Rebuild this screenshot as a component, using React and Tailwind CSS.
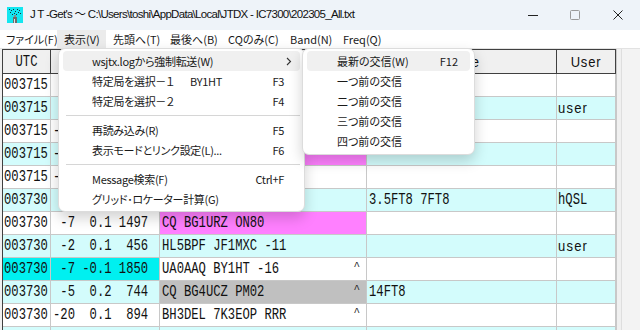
import React from "react";

const WHITE = "bg-white";
const CYAN = "bg-[#d3fcfc]";

const rows = [
  { utc: "003715", db: "", msg: "", note: "", user: "", bg: WHITE },
  { utc: "003715", db: "", msg: "", note: "", user: "user", bg: CYAN },
  { utc: "003715", db: "-", msg: "", note: "", user: "", bg: WHITE },
  { utc: "003715", db: "-", msg: "", note: "", user: "", bg: CYAN, msgBg: "bg-[#ff80ff]", mark: "*" },
  { utc: "003715", db: "-", msg: "", note: "", user: "", bg: WHITE },
  { utc: "003730", db: "", msg: "", note: "3.5FT8 7FT8", user: "hQSL", bg: CYAN },
  { utc: "003730", db: " -7  0.1 1497", msg: "CQ BG1URZ ON80", note: "", user: "", bg: WHITE, msgBg: "bg-[#ff80ff]" },
  { utc: "003730", db: " -2  0.1  456", msg: "HL5BPF JF1MXC -11", note: "", user: "user", bg: CYAN },
  { utc: "003730", db: " -7 -0.1 1850", msg: "UA0AAQ BY1HT -16", note: "", user: "", bg: WHITE, utcBg: "bg-[#00f0f0]", dbBg: "bg-[#00f0f0]", mark: "^" },
  { utc: "003730", db: " -5  0.2  744", msg: "CQ BG4UCZ PM02", note: "14FT8", user: "", bg: CYAN, msgBg: "bg-[#c0c0c0]", mark: "^" },
  { utc: "003730", db: "-20  0.1  894", msg: "BH3DEL 7K3EOP RRR", note: "", user: "", bg: WHITE, mark: "^" },
  { utc: "", db: "", msg: "", note: "", user: "", bg: CYAN },
];

const mainItems = [
  { label: "wsjtx.logから強制転送(W)", arrow: true, hl: true },
  { label: "特定局を選択－１", extra: "BY1HT", key: "F3" },
  { label: "特定局を選択－２", key: "F4" },
  "sep",
  { label: "再読み込み(R)", key: "F5" },
  { label: "表示モードとリンク設定(L)...", key: "F6" },
  "sep",
  { label: "Message検索(F)", key: "Ctrl+F" },
  { label: "グリッド･ロケーター計算(G)" },
];

const subItems = [
  { label: "最新の交信(W)", key: "F12", hl: true },
  { label: "一つ前の交信" },
  { label: "二つ前の交信" },
  { label: "三つ前の交信" },
  { label: "四つ前の交信" },
];

const menuBar = [
  { label: "ファイル(F)", w: "w-[57px] pl-[6px]" },
  { label: "表示(V)", w: "w-[49px] pl-[7px]", hl: true },
  { label: "先頭へ(T)", w: "w-[57px] pl-[7px]" },
  { label: "最後へ(B)", w: "w-[58px] pl-[7px]" },
  { label: "CQのみ(C)", w: "w-[62px] pl-[7px]" },
  { label: "Band(N)", w: "w-[53px] pl-[7px]" },
  { label: "Freq(Q)", w: "w-[50px] pl-[7px]" },
];

function Mono({ children, className = "" }) {
  return (
    <span className={`inline-block whitespace-pre font-['Liberation_Mono',monospace] text-[12.2px] leading-[12px] scale-y-[1.3] text-[#111] ${className}`}>
      {children}
    </span>
  );
}

function AppIcon() {
  return (
    <svg width="16" height="16" viewBox="0 0 16 16">
      <rect width="16" height="16" fill="#12e6f0" />
      <g fill="#1a2a3a">
        <rect x="2" y="2" width="1" height="1" />
        <rect x="4" y="3" width="1" height="1" />
        <rect x="6" y="2" width="1" height="1" />
        <rect x="8" y="4" width="1" height="1" />
        <rect x="10" y="2" width="1" height="1" />
        <rect x="12" y="3" width="1" height="1" />
        <rect x="3" y="5" width="1" height="1" />
        <rect x="7" y="6" width="1" height="1" />
        <rect x="11" y="5" width="1" height="1" />
        <rect x="13" y="6" width="1" height="1" />
        <rect x="5" y="7" width="1" height="1" />
        <rect x="9" y="7" width="1" height="1" />
      </g>
      <rect x="6" y="10" width="4" height="6" fill="#6b6b6b" />
      <rect x="7" y="8" width="2" height="2" fill="#8a8a8a" />
      <rect x="7" y="12" width="1" height="4" fill="#e0e0e0" />
    </svg>
  );
}

function TitleBar() {
  return (
    <div className="flex h-[30px] items-center bg-[#eef3f9]">
      <div className="ml-[7px] flex h-[16px] w-[16px]">
        <AppIcon />
      </div>
      <div className="ml-[7px] text-[11.5px] tracking-[-0.7px] text-[#111] font-['Liberation_Sans','Noto_Sans_CJK_JP',sans-serif] whitespace-pre">
        J T -Get's 〜 C:\Users\toshi\AppData\Local\JTDX - IC7300\202305_All.txt
      </div>
      <div className="flex-1" />
      <div className="flex h-full w-[42px] items-center justify-center">
        <svg width="10" height="10" viewBox="0 0 10 10">
          <path d="M0 5.5h10" stroke="#222" strokeWidth="1" />
        </svg>
      </div>
      <div className="flex h-full w-[42px] items-center justify-center">
        <svg width="10" height="10" viewBox="0 0 10 10">
          <rect x="0.5" y="0.5" width="9" height="9" rx="1" fill="none" stroke="#9a9a9a" strokeWidth="1" />
        </svg>
      </div>
      <div className="flex h-full w-[44px] items-center justify-center">
        <svg width="10" height="10" viewBox="0 0 10 10">
          <path d="M0.5 0.5l9 9M9.5 0.5l-9 9" stroke="#222" strokeWidth="1" />
        </svg>
      </div>
    </div>
  );
}

function MenuBar() {
  return (
    <div className="flex h-[18px] items-center bg-white text-[11px] text-[#1a1a1a] font-['Noto_Sans_CJK_JP',sans-serif] [font-feature-settings:'palt']">
      {menuBar.map((m) => (
        <div
          key={m.label}
          className={`flex h-full items-center whitespace-nowrap ${m.w} ${m.hl ? "bg-[#ebebeb]" : ""}`}
        >
          {m.label}
        </div>
      ))}
    </div>
  );
}

function HeaderRow() {
  return (
    <div className="flex h-[25px] border-y border-[#404040] bg-[#f0f0f0]">
      <div className="flex w-[48px] items-center justify-center border-r border-[#404040]">
        <Mono>UTC</Mono>
      </div>
      <div className="w-[109px] border-r border-[#404040]" />
      <div className="w-[207px] border-r border-[#404040]" />
      <div className="flex w-[190px] items-center justify-end pr-[76px] border-r border-[#404040]">
        <span className="inline-block scale-y-[1.15] text-[13px] tracking-[1px] text-[#111] font-['Liberation_Sans',sans-serif]">Note</span>
      </div>
      <div className="flex w-[59px] items-center justify-center border-r border-[#404040]">
        <span className="inline-block scale-y-[1.15] text-[13px] tracking-[0.8px] text-[#111] font-['Liberation_Sans',sans-serif]">User</span>
      </div>
    </div>
  );
}

function Row({ r }) {
  return (
    <div className={`flex h-[23px] border-b border-[#c8c8c8] ${r.bg}`}>
      <div className={`flex w-[48px] items-center pl-[1px] border-r border-[#c8c8c8] ${r.utcBg || ""}`}>
        <Mono>{r.utc}</Mono>
      </div>
      <div className={`flex w-[109px] items-center pl-[2px] border-r border-[#c8c8c8] ${r.dbBg || ""}`}>
        <Mono>{r.db}</Mono>
      </div>
      <div className={`relative flex w-[207px] items-center pl-[2px] border-r border-[#c8c8c8] ${r.msgBg || ""}`}>
        <Mono>{r.msg}</Mono>
        {r.mark === "^" && (
          <span className="absolute right-[6px] top-[3px] font-['Liberation_Mono',monospace] text-[11px] leading-none text-[#222]">^</span>
        )}
        {r.mark === "*" && (
          <span className="absolute right-[7px] top-[5px] font-['Liberation_Mono',monospace] text-[12px] leading-none text-[#222]">*</span>
        )}
      </div>
      <div className="flex w-[190px] items-center pl-[2px] border-r border-[#c8c8c8]">
        <Mono>{r.note}</Mono>
      </div>
      <div className="flex w-[59px] items-center pl-[1px] border-r border-[#c8c8c8]">
        {r.user === "user" ? (
          <span className="inline-block scale-y-[1.15] text-[13px] tracking-[1.2px] text-[#111] font-['Liberation_Sans',sans-serif]">user</span>
        ) : (
          <Mono>{r.user}</Mono>
        )}
      </div>
    </div>
  );
}

function MainMenu() {
  return (
    <div className="absolute left-[58px] top-[48px] w-[247px] rounded-[7px] border border-[#dcdcdc] bg-white pt-[2px] pb-[2px] shadow-[0_6px_14px_rgba(0,0,0,0.18)] text-[11px] tracking-[-0.3px] text-[#1a1a1a] font-['Noto_Sans_CJK_JP',sans-serif] [font-feature-settings:'palt']">
      {mainItems.map((it, i) =>
        it === "sep" ? (
          <div key={i} className="flex h-[9px] items-center pl-[7px] pr-[4px]">
            <div className="h-[1px] w-full bg-[#d6d6d6]" />
          </div>
        ) : (
          <div
            key={i}
            className={`relative mx-[4px] flex h-[20px] items-center rounded-[4px] pl-[29px] pr-[16px] whitespace-nowrap ${it.hl ? "bg-[#f0f0f0]" : ""}`}
          >
            {it.extra ? (
              <>
                <span className="w-[98px]">{it.label}</span>
                <span>{it.extra}</span>
              </>
            ) : (
              <span>{it.label}</span>
            )}
            <span className="flex-1" />
            {it.key && <span>{it.key}</span>}
            {it.arrow && (
              <svg className="absolute right-[8px] top-[6px]" width="6" height="9" viewBox="0 0 6 9">
                <path d="M1 1l3.5 3.5L1 8" fill="none" stroke="#333" strokeWidth="1.1" />
              </svg>
            )}
          </div>
        )
      )}
    </div>
  );
}

function SubMenu() {
  return (
    <div className="absolute left-[302px] top-[48px] w-[173px] rounded-[7px] border border-[#dcdcdc] bg-white pt-[2px] pb-[3px] shadow-[0_6px_14px_rgba(0,0,0,0.18)] text-[11px] text-[#1a1a1a] font-['Noto_Sans_CJK_JP',sans-serif] [font-feature-settings:'palt']">
      {subItems.map((it) => (
        <div
          key={it.label}
          className={`mx-[4px] flex h-[20px] items-center rounded-[4px] pl-[30px] pr-[12px] whitespace-nowrap ${it.hl ? "bg-[#f0f0f0]" : ""}`}
        >
          <span>{it.label}</span>
          <span className="flex-1" />
          {it.key && <span>{it.key}</span>}
        </div>
      ))}
    </div>
  );
}

export default function App() {
  return (
    <div className="relative h-[330px] w-[640px] overflow-hidden bg-[#eef3f9]">
      <TitleBar />
      <MenuBar />
      <div className="h-[1px] bg-[#e2e2e2]" />
      <div className="flex bg-white">
        <div className="w-[2px] bg-[#f0f0f0]" />
        <div className="w-[614px] border-l border-[#404040]">
          <HeaderRow />
          {rows.map((r, i) => (
            <Row key={i} r={r} />
          ))}
        </div>
        <div className="flex w-[24px] bg-[#f0f0f0]">
          <div className="w-[5px] border-l border-[#c8c8c8]" />
          <div className="flex-1 border-l border-[#dedede] bg-[#f3f3f3]" />
        </div>
      </div>
      <MainMenu />
      <SubMenu />
    </div>
  );
}
